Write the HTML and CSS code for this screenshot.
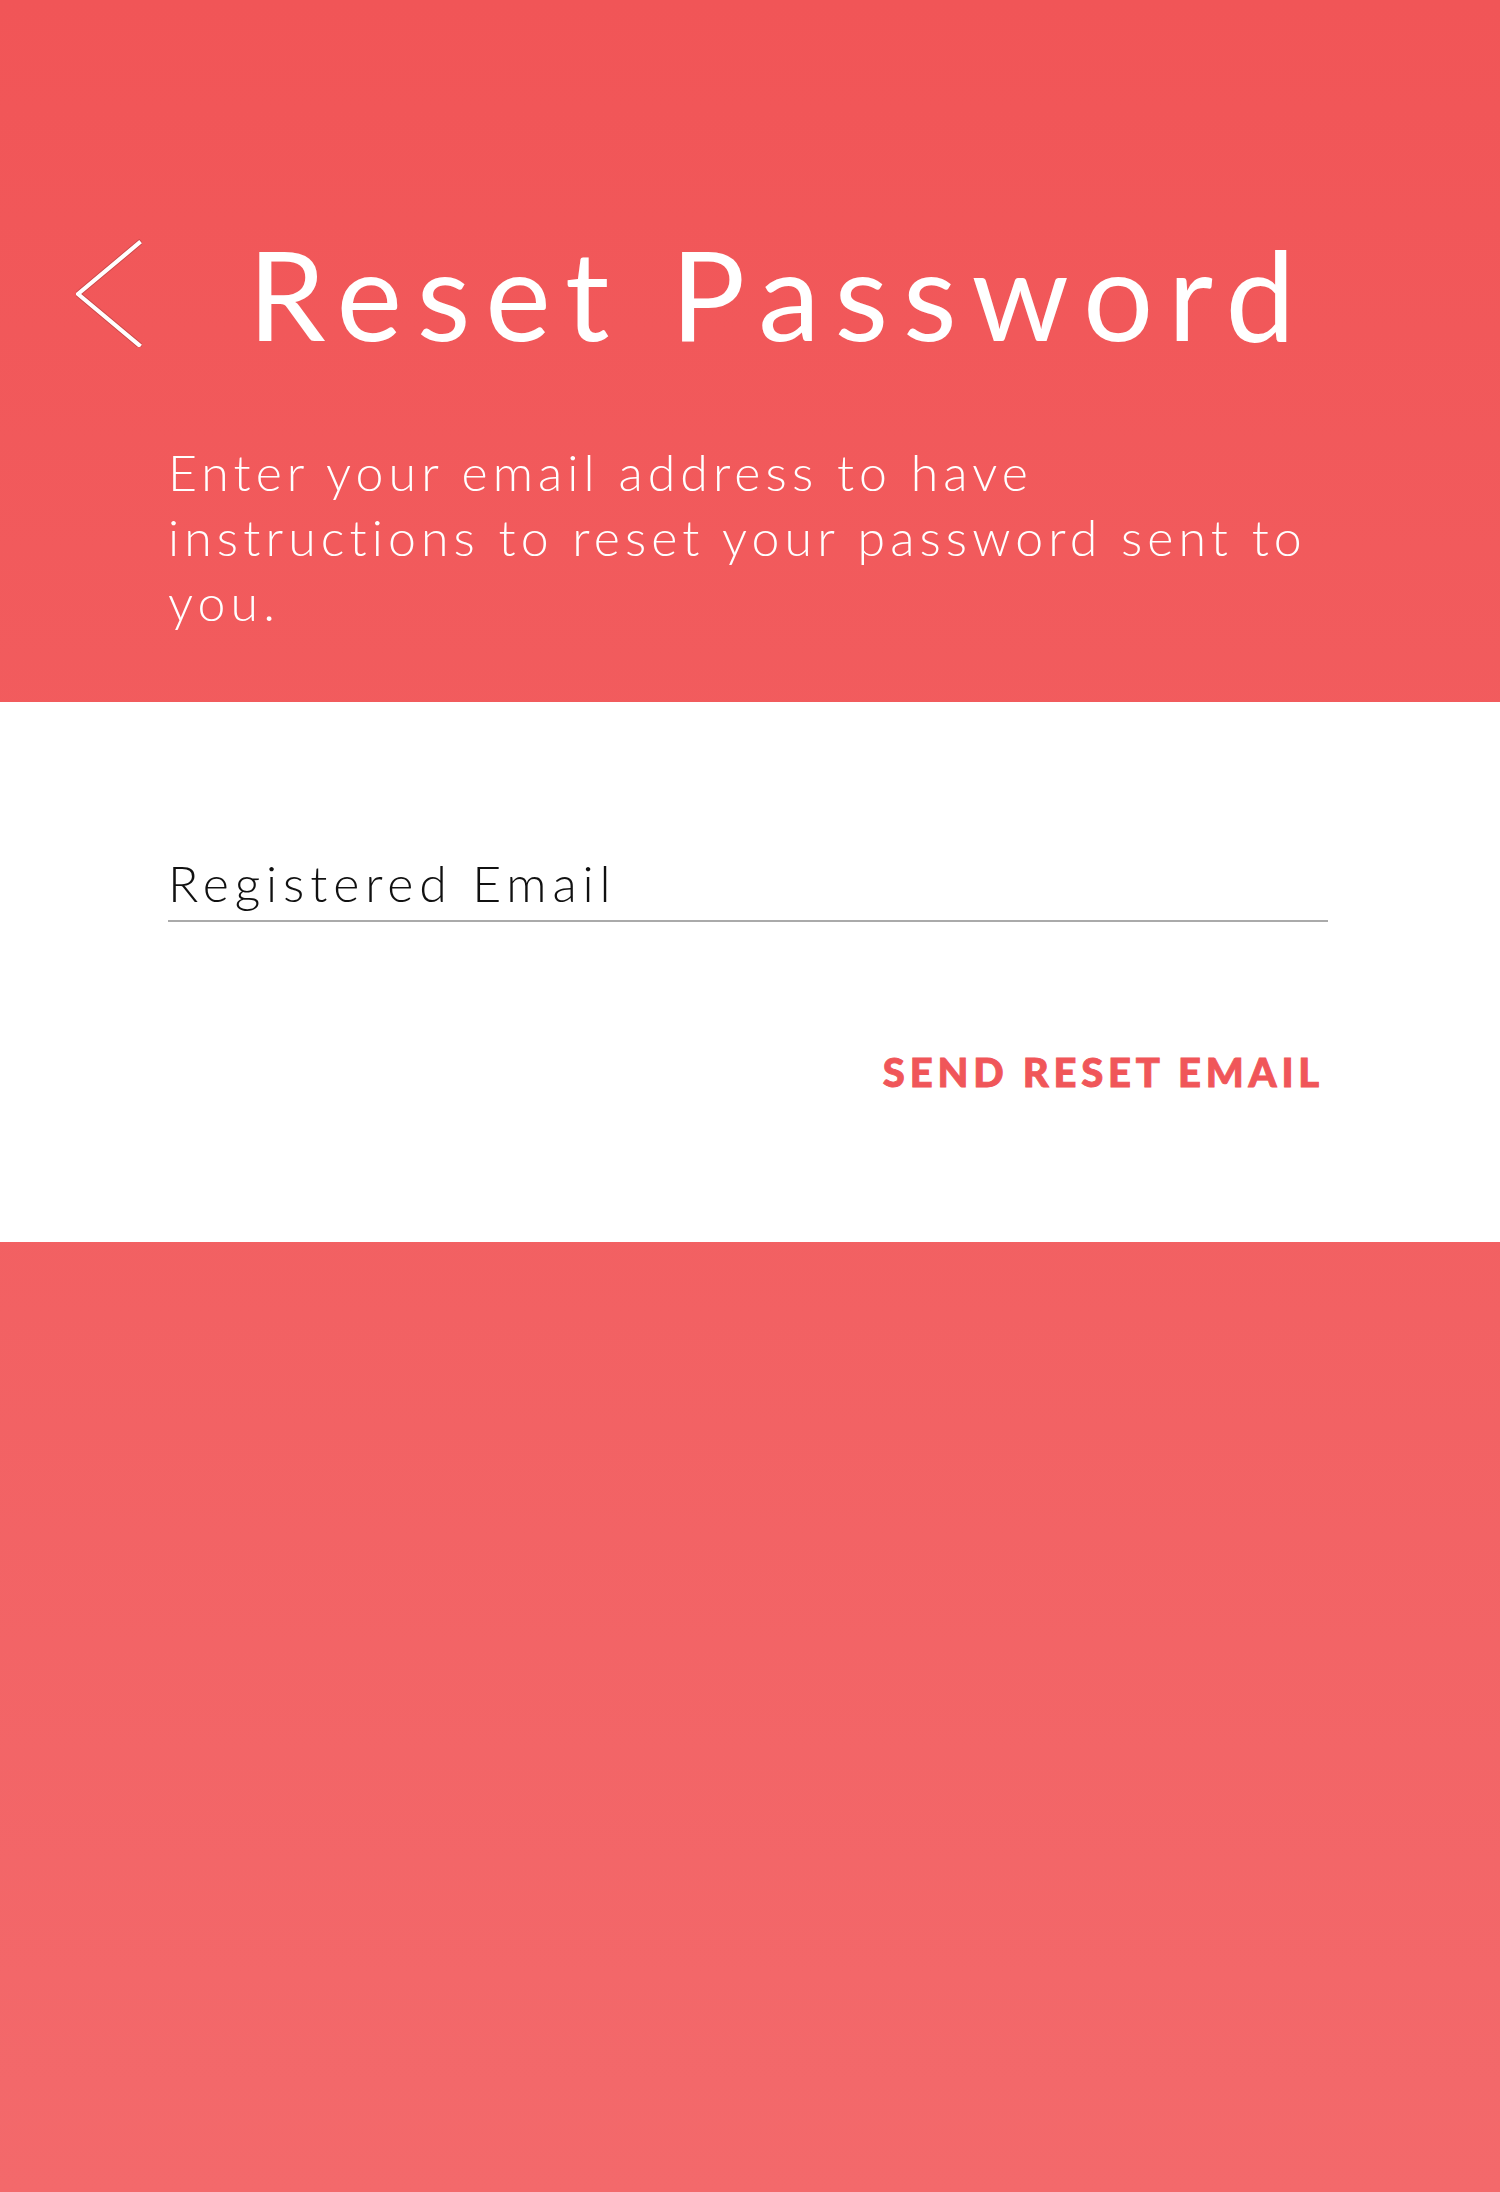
FILE: index.html
```html
<!DOCTYPE html>
<html lang="en">
<head>
<meta charset="utf-8">
<title>Reset Password</title>
<link rel="stylesheet" href="styles.css">
</head>
<body>
<main class="page">
  <section class="hero">
    <div class="hero-row">
      <a class="back" href="#" aria-label="Back">
        <svg width="66" height="108" viewBox="0 0 66 108" aria-hidden="true">
          <polyline points="63,4 2,55 63,106" fill="none" stroke="rgba(120,40,40,0.3)" stroke-width="6" stroke-linecap="square"/>
          <polyline points="63,4 2,55 63,106" fill="none" stroke="#ffffff" stroke-width="4.2" stroke-linecap="square" stroke-linejoin="miter"/>
        </svg>
      </a>
      <h1 class="title">Reset Password</h1>
    </div>
    <p class="intro">Enter your email address to have instructions to reset your password sent to you.</p>
  </section>
  <section class="card">
    <div class="field">Registered Email</div>
    <div class="actions">
      <a class="send" href="#">SEND RESET EMAIL</a>
    </div>
  </section>
  <section class="fill"></section>
</main>
</body>
</html>
```

FILE: styles.css
```css
html, body {
  margin: 0;
  padding: 0;
}
body {
  width: 1500px;
  min-height: 2192px;
  background: linear-gradient(180deg, #f15557 0%, #f3696b 100%);
  font-family: "Lato", "Noto Sans", sans-serif;
}
.page {
  display: flex;
  flex-direction: column;
  min-height: 2192px;
}
.hero {
  padding: 231px 0 67px 0;
  color: #ffffff;
}
.hero-row {
  display: flex;
  align-items: center;
  padding-left: 76px;
}
.back {
  display: flex;
  width: 66px;
  height: 108px;
  margin-right: 106px;
}
.title {
  margin: 0;
  font-size: 124px;
  line-height: 124px;
  font-weight: 400;
  letter-spacing: 14.8px;
  color: #ffffff;
}
.intro {
  margin: 85px 172px 0 168px;
  font-size: 50px;
  line-height: 65px;
  font-weight: 300;
  letter-spacing: 5.1px;
}
.card {
  background: #ffffff;
  padding: 149px 172px 150px 168px;
  height: 540px;
  box-sizing: border-box;
}
.field {
  font-size: 50px;
  line-height: 65px;
  font-weight: 300;
  letter-spacing: 5.9px;
  color: #111111;
  padding-bottom: 4px;
  border-bottom: 2px solid #aaaaaa;
}
.actions {
  display: flex;
  justify-content: flex-end;
  margin-top: 130px;
  padding-right: 4px;
}
.send {
  font-size: 40px;
  line-height: 40px;
  font-weight: 900;
  letter-spacing: 4.8px;
  color: #f05659;
  -webkit-text-stroke: 0.9px #f05659;
  text-decoration: none;
}
.fill {
  flex: 1;
}
```
